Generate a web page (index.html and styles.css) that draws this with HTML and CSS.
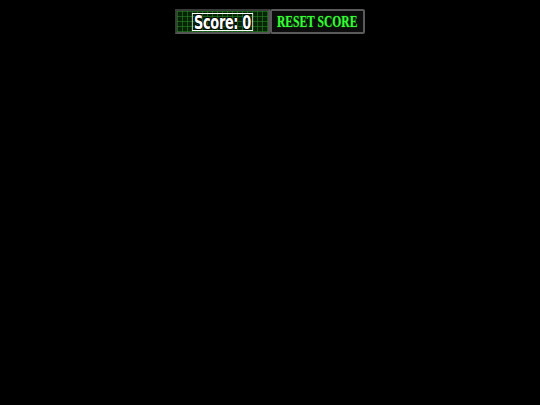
FILE: index.html
```html
<!DOCTYPE html>
<html>
<head>
<meta charset="utf-8">
<link rel="stylesheet" href="styles.css">
</head>
<body>
<div class="bar">
  <div class="score"><span class="score-text">Score: 0</span></div>
  <button class="reset"><span class="reset-text">RESET SCORE</span></button>
</div>
</body>
</html>
```
FILE: styles.css
```css
html, body {
  margin: 0;
  padding: 0;
  background: #000;
  width: 540px;
  height: 405px;
  overflow: hidden;
}
.bar {
  display: flex;
  justify-content: center;
  padding-top: 9px;
}
.score {
  width: 95px;
  height: 25px;
  box-sizing: border-box;
  border: 2px solid #3a3a3a;
  border-right-color: #555;
  border-bottom-color: #555;
  background-color: #072407;
  background-image:
    repeating-linear-gradient(90deg, rgba(40,140,40,0.55) 0 1px, transparent 1px 5px),
    repeating-linear-gradient(0deg, rgba(40,140,40,0.55) 0 1px, transparent 1px 5px);
  display: flex;
  align-items: center;
  justify-content: center;
}
.score-text {
  font-family: "DejaVu Sans Condensed", "DejaVu Sans", sans-serif;
  font-weight: bold;
  font-size: 20px;
  line-height: 18px;
  height: 18px;
  color: #fff;
  letter-spacing: -0.5px;
  display: inline-block;
  transform: scaleX(0.72);
  white-space: nowrap;
  text-shadow: 1px 0 #000, -1px 0 #000, 0 1px #000, 0 -1px #000;
  padding: 0 3px;
  outline: 1.5px solid #fff;
  outline-offset: -1px;
}
.reset {
  width: 95px;
  height: 25px;
  box-sizing: border-box;
  margin: 0;
  padding: 0;
  border: 2px solid #5a5a5a;
  border-radius: 2px;
  background: #0c0c0c;
  display: flex;
  align-items: center;
  justify-content: center;
  overflow: hidden;
}
.reset-text {
  font-family: "Liberation Serif", serif;
  font-weight: bold;
  font-size: 17px;
  line-height: 1;
  color: #33ff33;
  display: inline-block;
  transform: scaleX(0.68);
  white-space: nowrap;
  text-shadow: 0 0 2px rgba(50,255,50,0.4);
}
```
